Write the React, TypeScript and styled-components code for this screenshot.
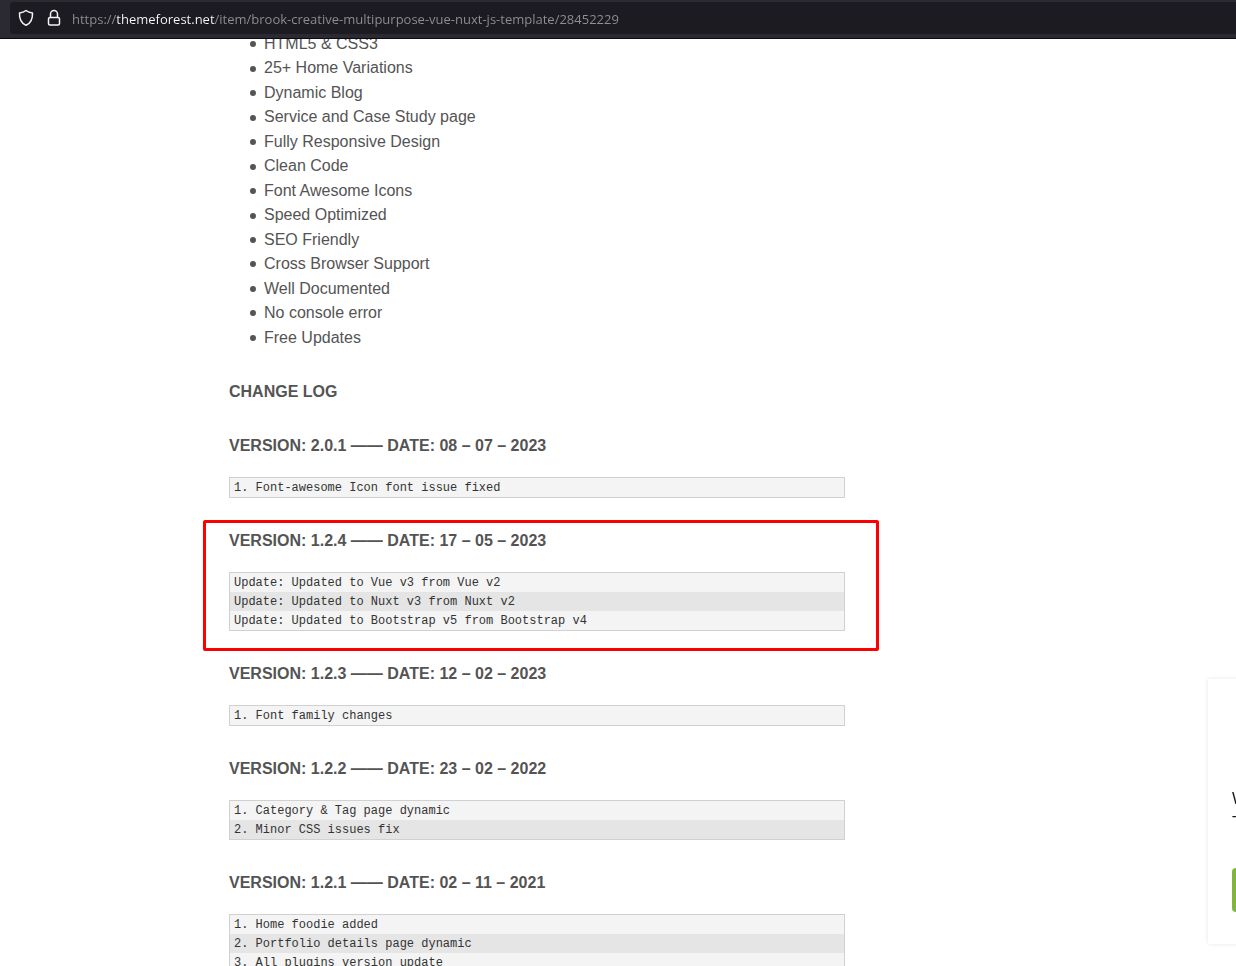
import React from "react";
import styled, { createGlobalStyle } from "styled-components";

const GlobalStyle = createGlobalStyle`
  * { box-sizing: border-box; }
  body {
    margin: 0;
    background: #ffffff;
    color: #545454;
    font-family: "Liberation Sans", Arial, sans-serif;
    font-size: 16px;
  }
`;

const Page = styled.div`
  display: flex;
  flex-direction: column;
  height: 100vh;
  overflow: hidden;
`;

const BrowserBar = styled.header`
  flex: none;
  padding: 2px 0 4px 10px;
  background: #2b2a33;
  border-bottom: 1px solid #0a0a0e;
`;

const AddressBar = styled.div`
  display: flex;
  align-items: center;
  gap: 10px;
  height: 32px;
  padding-left: 8px;
  background: #1c1b22;
  border-radius: 4px 0 0 4px;
`;

const BarIcons = styled.div`
  display: flex;
  gap: 12px;
`;

const BarIcon = styled.svg`
  flex: none;
  width: 16px;
  height: 18px;
  fill: none;
  stroke: #f3f3f5;
  stroke-width: 1.5;
  stroke-linejoin: round;
`;

const UrlInput = styled.input`
  flex: 1;
  min-width: 0;
  padding: 2px 0 0;
  border: 0;
  outline: 0;
  font-family: "Open Sans", "Noto Sans", sans-serif;
  font-size: 13px;
  line-height: 20px;
  color: #8f8f95;
  background: linear-gradient(90deg, #8f8f95 45px, #fbfbfe 45px, #fbfbfe 143px, #8f8f95 143px);
  background-clip: text;
  -webkit-background-clip: text;
  -webkit-text-fill-color: transparent;
`;

const Content = styled.main`
  flex: 1;
  min-height: 0;
  overflow: hidden;
  padding: 0 24px 0 229px;
`;

const Article = styled.article`
  max-width: 616px;
  margin-top: -7px;
`;

const FeatureList = styled.ul`
  margin: 0 0 30px;
  padding-left: 21px;
  line-height: 1.53;
  list-style: none;
`;

const Feature = styled.li`
  display: flex;
  align-items: center;
  gap: 8px;

  &::before {
    content: "";
    width: 6px;
    height: 6px;
    border-radius: 50%;
    background: currentColor;
  }
`;

const Heading = styled.h3`
  margin: 0 0 30px;
  font-size: 16px;
  line-height: 24px;
  font-weight: 700;
`;

const VersionHeading = styled(Heading)`
  margin-bottom: 19px;
`;

const Release = styled.section<{ $marked?: boolean }>`
  position: relative;
  margin-bottom: 31px;

  ${({ $marked }) =>
    $marked &&
    `&::after {
      content: "";
      position: absolute;
      inset: -9px -34px -20px -26px;
      border: 3px solid #ff0000;
      border-radius: 2px;
      pointer-events: none;
    }`}
`;

const Changes = styled.div`
  border: 1px solid #d1d1d1;
  background: #f4f4f4;
  color: #333333;
  font-family: "Liberation Mono", "Courier New", monospace;
  font-size: 12px;
  line-height: 17px;
`;

const ChangeLine = styled.div`
  padding: 2px 4px 0;
  white-space: pre;

  &:nth-child(even) {
    background: #e5e5e5;
  }
`;

const SideCard = styled.aside`
  position: fixed;
  right: -272px;
  bottom: 22px;
  width: 300px;
  padding: 108px 24px 32px;
  background: #ffffff;
  box-shadow: 0 0 4px rgba(0, 0, 0, 0.1);
  color: #1a1a1a;
`;

const CardText = styled.p`
  margin: 0 0 33px;
  line-height: 24px;
`;

const CardButton = styled.button`
  display: block;
  width: 100%;
  height: 44px;
  border: 0;
  border-radius: 4px;
  background: #82b440;
`;

const features = [
  "HTML5 & CSS3",
  "25+ Home Variations",
  "Dynamic Blog",
  "Service and Case Study page",
  "Fully Responsive Design",
  "Clean Code",
  "Font Awesome Icons",
  "Speed Optimized",
  "SEO Friendly",
  "Cross Browser Support",
  "Well Documented",
  "No console error",
  "Free Updates",
];

interface ReleaseInfo {
  version: string;
  date: string;
  marked?: boolean;
  changes: string[];
}

const releases: ReleaseInfo[] = [
  { version: "2.0.1", date: "08 – 07 – 2023", changes: ["1. Font-awesome Icon font issue fixed"] },
  {
    version: "1.2.4",
    date: "17 – 05 – 2023",
    marked: true,
    changes: [
      "Update: Updated to Vue v3 from Vue v2",
      "Update: Updated to Nuxt v3 from Nuxt v2",
      "Update: Updated to Bootstrap v5 from Bootstrap v4",
    ],
  },
  { version: "1.2.3", date: "12 – 02 – 2023", changes: ["1. Font family changes"] },
  {
    version: "1.2.2",
    date: "23 – 02 – 2022",
    changes: ["1. Category & Tag page dynamic", "2. Minor CSS issues fix"],
  },
  {
    version: "1.2.1",
    date: "02 – 11 – 2021",
    changes: ["1. Home foodie added", "2. Portfolio details page dynamic", "3. All plugins version update"],
  },
];

export default function App() {
  return (
    <Page>
      <GlobalStyle />
      <BrowserBar>
        <AddressBar>
          <BarIcons>
            <BarIcon viewBox="0 0 16 18" aria-hidden="true">
              <path d="M8 1.5 C6.2 2.9 3.9 3.7 1.5 4 C1.2 10 3.2 14.2 8 16.3 C12.8 14.2 14.8 10 14.5 4 C12.1 3.7 9.8 2.9 8 1.5 Z" />
            </BarIcon>
            <BarIcon viewBox="0 0 16 18" aria-hidden="true">
              <rect x="2.5" y="8.5" width="11" height="7.5" rx="1.5" />
              <path d="M4.5 8.5 V5 a3.5 3.5 0 0 1 7 0 V8.5" />
            </BarIcon>
          </BarIcons>
          <UrlInput
            type="text"
            aria-label="Address"
            spellCheck={false}
            defaultValue="https://themeforest.net/item/brook-creative-multipurpose-vue-nuxt-js-template/28452229"
          />
        </AddressBar>
      </BrowserBar>
      <Content>
        <Article>
          <FeatureList>
            {features.map((feature) => (
              <Feature key={feature}>{feature}</Feature>
            ))}
          </FeatureList>
          <Heading as="h2">CHANGE LOG</Heading>
          {releases.map(({ version, date, marked, changes }) => (
            <Release key={version} $marked={marked}>
              <VersionHeading>{`VERSION: ${version} —— DATE: ${date}`}</VersionHeading>
              <Changes>
                {changes.map((change) => (
                  <ChangeLine key={change}>{change}</ChangeLine>
                ))}
              </Changes>
            </Release>
          ))}
        </Article>
      </Content>
      <SideCard>
        <CardText>
          W<br />T
        </CardText>
        <CardButton type="button" aria-label="Accept" />
      </SideCard>
    </Page>
  );
}
